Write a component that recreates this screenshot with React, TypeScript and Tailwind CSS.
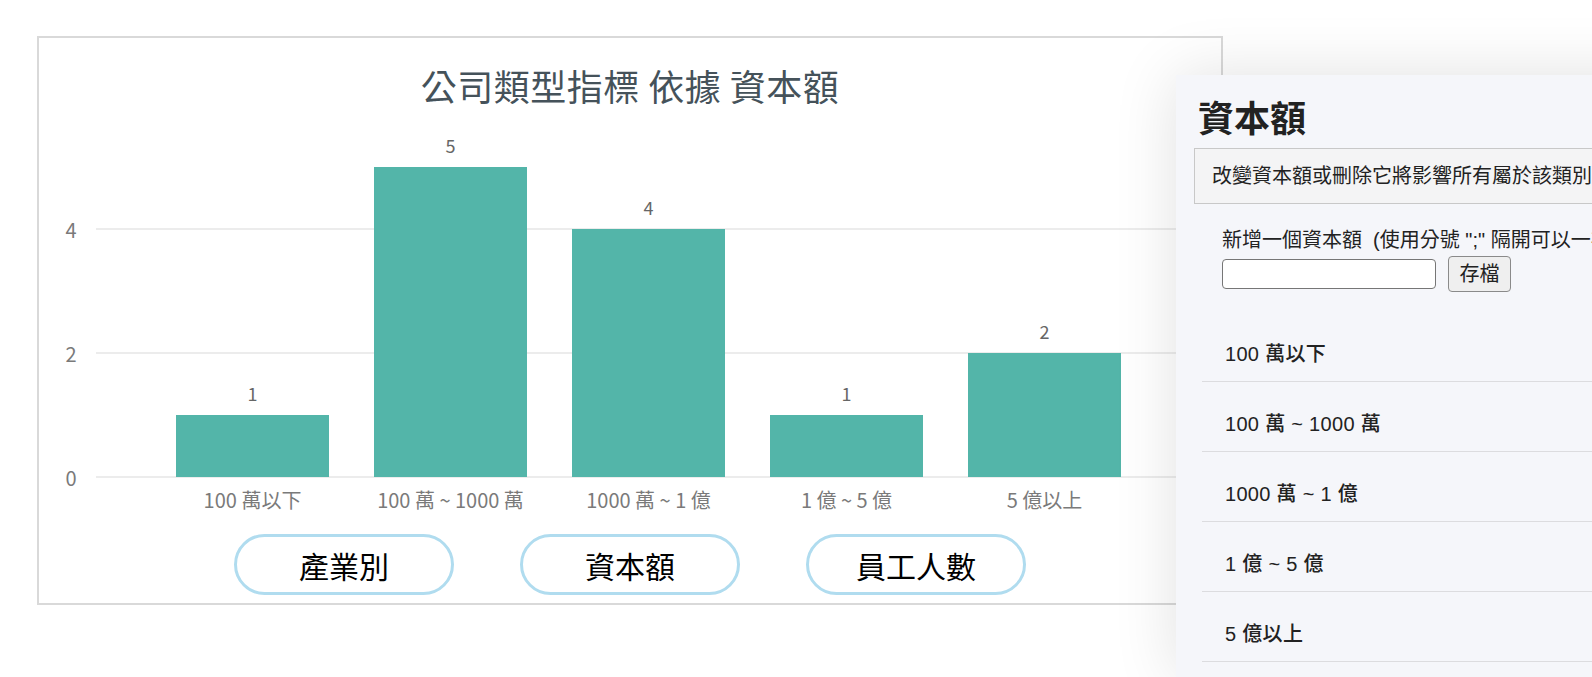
import React from "react";

// chart geometry, in px inside the svg
const BASE_Y = 372;
const UNIT = 62;
const BAR_W = 153;

const bars = [
  { label: "100 萬以下", value: 1, x: 137 },
  { label: "100 萬 ~ 1000 萬", value: 5, x: 335 },
  { label: "1000 萬 ~ 1 億", value: 4, x: 533 },
  { label: "1 億 ~ 5 億", value: 1, x: 731 },
  { label: "5 億以上", value: 2, x: 929 },
];

const ticks = [4, 2, 0];

const tabs = ["產業別", "資本額", "員工人數"];

const capitalItems = ["100 萬以下", "100 萬 ~ 1000 萬", "1000 萬 ~ 1 億", "1 億 ~ 5 億", "5 億以上"];

const chartFont = '"Noto Sans CJK TC", "Noto Sans", sans-serif';

function BarChart() {
  return (
    <svg width={1182} height={410} className="block" style={{ fontFamily: chartFont }}>
      {ticks.map(t => {
        const y = BASE_Y - t * UNIT;
        return (
          <g key={t}>
            <line x1={57} x2={1160} y1={y} y2={y} stroke="#e6e6e6" strokeWidth={1.5} />
            <text x={32} y={y} textAnchor="middle" dominantBaseline="central" fontSize={20} fill="#7a7a7a">
              {t}
            </text>
          </g>
        );
      })}
      {bars.map(b => {
        const h = b.value * UNIT;
        const top = BASE_Y - h;
        const cx = b.x + BAR_W / 2;
        return (
          <g key={b.label}>
            <rect x={b.x} y={top} width={BAR_W} height={h} fill="#53b5a9" />
            <text x={cx} y={top - 22} textAnchor="middle" dominantBaseline="central" fontSize={18} fill="#666">
              {b.value}
            </text>
            <text x={cx} y={394} textAnchor="middle" dominantBaseline="central" fontSize={20} fill="#7a7a7a">
              {b.label}
            </text>
          </g>
        );
      })}
    </svg>
  );
}

export default function App() {
  return (
    <div className="relative w-full h-[677px] bg-white overflow-hidden">
      {/* Chart card */}
      <div className="ml-[37px] pt-[36px]">
        <div className="w-[1186px] h-[569px] border-2 border-[#d9d9d9] bg-white flex flex-col">
          <h2
            className="mt-[27px] text-center text-[36px] leading-[40px] tracking-[0.5px] text-[#45525a]"
            style={{ fontFamily: chartFont }}
          >
            公司類型指標 依據 資本額
          </h2>
          <BarChart />
          <div className="mt-[19px] flex justify-center gap-[66px]">
            {tabs.map(t => (
              <button
                key={t}
                className="w-[220px] h-[61px] rounded-full border-[3px] border-[#b0dcef] bg-white text-[30px] leading-none text-black"
                style={{ fontFamily: chartFont }}
              >
                {t}
              </button>
            ))}
          </div>
        </div>
      </div>

      {/* Side drawer */}
      <div
        className="absolute left-[1176px] top-[75px] bottom-0 w-[700px] bg-[#f5f6fa] shadow-[0_0_60px_rgba(0,0,0,0.12)]"
        style={{ fontFamily: '"Liberation Sans", "Noto Sans CJK TC", sans-serif' }}
      >
        <h1 className="pt-[23px] pl-[22px] text-[36px] leading-[44px] font-bold text-[#222]">資本額</h1>

        <div className="mt-[6px] ml-[18px] mr-[20px] h-[56px] border-[1.5px] border-[#c8c8c8] bg-[#f4f4f5] pl-[17px] flex items-center whitespace-nowrap overflow-hidden">
          <span className="text-[20px] leading-6 text-[#222]">改變資本額或刪除它將影響所有屬於該類別的公司。</span>
        </div>

        <div className="pl-[46px] mt-[24px]">
          <p className="text-[20px] leading-6 text-[#222] whitespace-nowrap">
            新增一個資本額 &nbsp;(使用分號 ";" 隔開可以一次新增多個)
          </p>
          <div className="mt-[4px] flex items-center gap-[12px]">
            <input className="w-[214px] h-[30px] bg-white border border-[#767676] rounded-[4px] px-2 text-[18px]" />
            <button className="w-[63px] h-[36px] bg-[#efefef] border border-[#8a8a8a] rounded-[4px] text-[20px] text-[#222]">
              存檔
            </button>
          </div>
        </div>

        <ul className="mt-[20px] ml-[26px]">
          {capitalItems.map(item => (
            <li
              key={item}
              className="pt-[30px] pb-[15px] pl-[23px] border-b border-[#dcdcdf] text-[20px] leading-6 font-medium text-[#222] tracking-[0.3px]"
            >
              {item}
            </li>
          ))}
        </ul>
      </div>
    </div>
  );
}
